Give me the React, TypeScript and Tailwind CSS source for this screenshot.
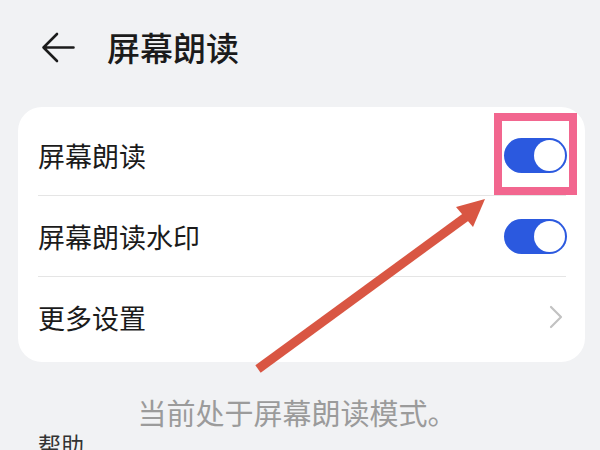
import { FC } from "react";

const Toggle: FC = () => (
  <div className="w-[63px] h-[35px] rounded-full bg-[#2b59df] flex items-center justify-end pr-[2px]">
    <div className="w-[31px] h-[31px] rounded-full bg-white" />
  </div>
);

const App: FC = () => {
  return (
    <div
      className="relative w-[600px] h-[450px] overflow-hidden bg-[#f1f2f4] text-[#1b1b1b]"
      style={{ fontFamily: '"Noto Sans CJK SC", "Noto Sans", sans-serif' }}
    >
      <div className="h-[95px] flex items-center pl-[41px] gap-[32px]">
        <svg width="34" height="31" viewBox="0 0 34 31" fill="none" stroke="#1b1b1b" strokeWidth="2.6" strokeLinecap="round" strokeLinejoin="round">
          <path d="M32.5 15.5H2.5M16 2L2.5 15.5L16 29" />
        </svg>
        <h1 className="text-[33px] leading-none font-medium">屏幕朗读</h1>
      </div>

      <div className="ml-[18px] mr-[15px] mt-[12px] bg-white rounded-[24px] pt-[8px] pb-[5px]">
        <div className="h-[80px] flex items-center justify-between pl-[20px] pr-[18px]">
          <span className="text-[27px] leading-none">屏幕朗读</span>
          <Toggle />
        </div>
        <hr className="ml-[20px] mr-[19px] border-[#e5e5e5]" />
        <div className="h-[80px] flex items-center justify-between pl-[20px] pr-[18px]">
          <span className="text-[27px] leading-none">屏幕朗读水印</span>
          <Toggle />
        </div>
        <hr className="ml-[20px] mr-[19px] border-[#e5e5e5]" />
        <div className="h-[80px] flex items-center justify-between pl-[20px] pr-[22px]">
          <span className="text-[27px] leading-none">更多设置</span>
          <svg width="14" height="24" viewBox="0 0 14 24" fill="none" stroke="#c2c2c2" strokeWidth="2.2" strokeLinecap="round" strokeLinejoin="round">
            <path d="M2 2l10 10-10 10" />
          </svg>
        </div>
      </div>

      <p className="mt-[36px] text-center text-[29px] leading-none text-[#9b9b9b] pr-[6px]">
        当前处于屏幕朗读模式。
      </p>
      <p className="mt-[6px] pl-[38px] text-[23px] leading-none text-[#333]">帮助</p>

      <div className="absolute left-[494px] top-[113px] w-[83px] h-[82px] border-[8px] border-[#f2668f]" />
      <svg className="absolute left-0 top-0" width="600" height="450" viewBox="0 0 600 450">
        <line x1="258" y1="369" x2="470" y2="214" stroke="#d95643" strokeWidth="9" strokeLinecap="butt" />
        <polygon points="485,199 456,207 473,227" fill="#d95643" />
      </svg>
    </div>
  );
};

export default App;
